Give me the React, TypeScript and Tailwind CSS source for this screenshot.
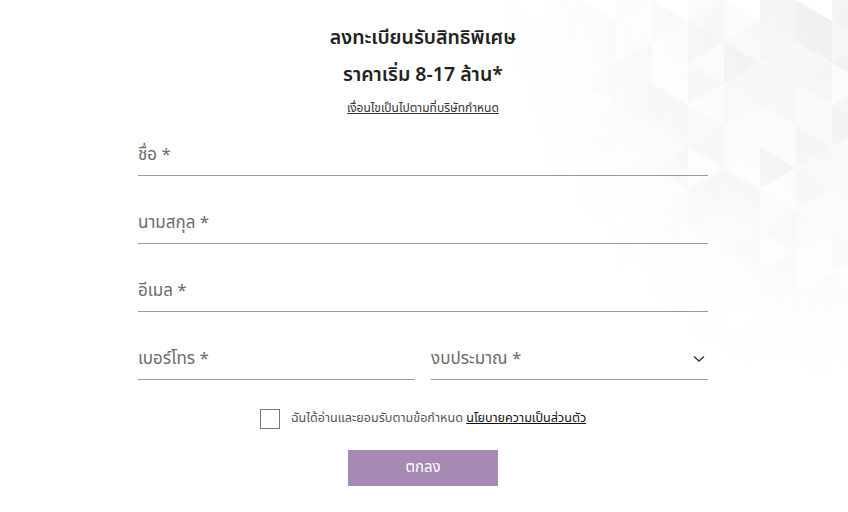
import React from "react";

const font = { fontFamily: '"Noto Sans Thai", "Noto Sans Thai UI", "Noto Sans", "DejaVu Sans", sans-serif' };

function Triangles() {
  const cols = 10;
  const rows = 10;
  const w = 36;
  const h = 42;
  const shades = ["#f2f2f2", "#f7f7f7", "#fbfbfb", "#f4f4f4", "#f9f9f9", "#f0f0f0", "#f6f6f6"];
  const polys: React.ReactNode[] = [];
  for (let r = 0; r < rows; r++) {
    for (let c = 0; c < cols; c++) {
      const x = c * w;
      const y = r * h - (c % 2 ? h / 2 : 0);
      const s1 = shades[(r * 3 + c * 5) % shades.length];
      const s2 = shades[(r * 5 + c * 2 + 3) % shades.length];
      polys.push(<polygon key={`a${r}-${c}`} points={`${x},${y} ${x + w},${y + h / 2} ${x},${y + h}`} fill={s1} />);
      polys.push(<polygon key={`b${r}-${c}`} points={`${x + w},${y + h / 2} ${x},${y + h} ${x + w},${y + h * 1.5}`} fill={s2} />);
    }
  }
  return (
    <svg width="340" height="380" viewBox="0 0 340 380" className="absolute right-0 top-0">
      <defs>
        <radialGradient id="fade" cx="1" cy="0" r="1.05" gradientUnits="objectBoundingBox">
          <stop offset="0" stopColor="white" stopOpacity="1" />
          <stop offset="0.45" stopColor="white" stopOpacity="0.7" />
          <stop offset="0.8" stopColor="white" stopOpacity="0.15" />
          <stop offset="1" stopColor="white" stopOpacity="0" />
        </radialGradient>
        <mask id="m">
          <rect width="340" height="380" fill="url(#fade)" />
        </mask>
      </defs>
      <g mask="url(#m)">{polys}</g>
    </svg>
  );
}

function Field({ label, chevron }: { label: string; chevron?: boolean }) {
  return (
    <div className="flex items-center justify-between border-b border-[#9a9a9a] pb-[8px]">
      <span className="text-[17px] leading-6 text-[#6b6b6b]">{label}</span>
      {chevron && (
        <svg width="12" height="8" viewBox="0 0 12 8" className="mr-[3px]">
          <path d="M1 1.5 L6 6 L11 1.5" fill="none" stroke="#333" strokeWidth="1.4" />
        </svg>
      )}
    </div>
  );
}

export default function App() {
  return (
    <div className="relative h-[512px] w-[848px] overflow-hidden bg-white" style={font}>
      <Triangles />
      <div className="relative ml-[138px] flex w-[570px] flex-col pt-6">
        <h1 className="text-center text-[19.5px] font-semibold leading-[28px] text-[#222]">ลงทะเบียนรับสิทธิพิเศษ</h1>
        <h2 className="mt-[9px] text-center text-[19.5px] font-semibold leading-[28px] text-[#222]">ราคาเริ่ม 8-17 ล้าน*</h2>
        <p className="mt-[11px] text-center text-[12px] leading-4 text-[#333] underline">เงื่อนไขเป็นไปตามที่บริษัทกำหนด</p>
        <div className="mt-[27px] flex flex-col gap-[35px]">
          <Field label="ชื่อ *" />
          <Field label="นามสกุล *" />
          <Field label="อีเมล *" />
          <div className="flex gap-4">
            <div className="flex-1"><Field label="เบอร์โทร *" /></div>
            <div className="flex-1"><Field label="งบประมาณ *" chevron /></div>
          </div>
        </div>
        <div className="mt-[29px] flex items-center justify-center gap-[11px]">
          <span className="h-5 w-5 border border-[#777] bg-white" />
          <span className="text-[12.6px] leading-5 text-[#555]">
            ฉันได้อ่านและยอมรับตามข้อกำหนด{" "}
            <span className="text-[#111] underline">นโยบายความเป็นส่วนตัว</span>
          </span>
        </div>
        <button className="mx-auto mt-[21px] h-9 w-[150px] bg-[#a48ab5] text-[15px] text-white">ตกลง</button>
      </div>
    </div>
  );
}
